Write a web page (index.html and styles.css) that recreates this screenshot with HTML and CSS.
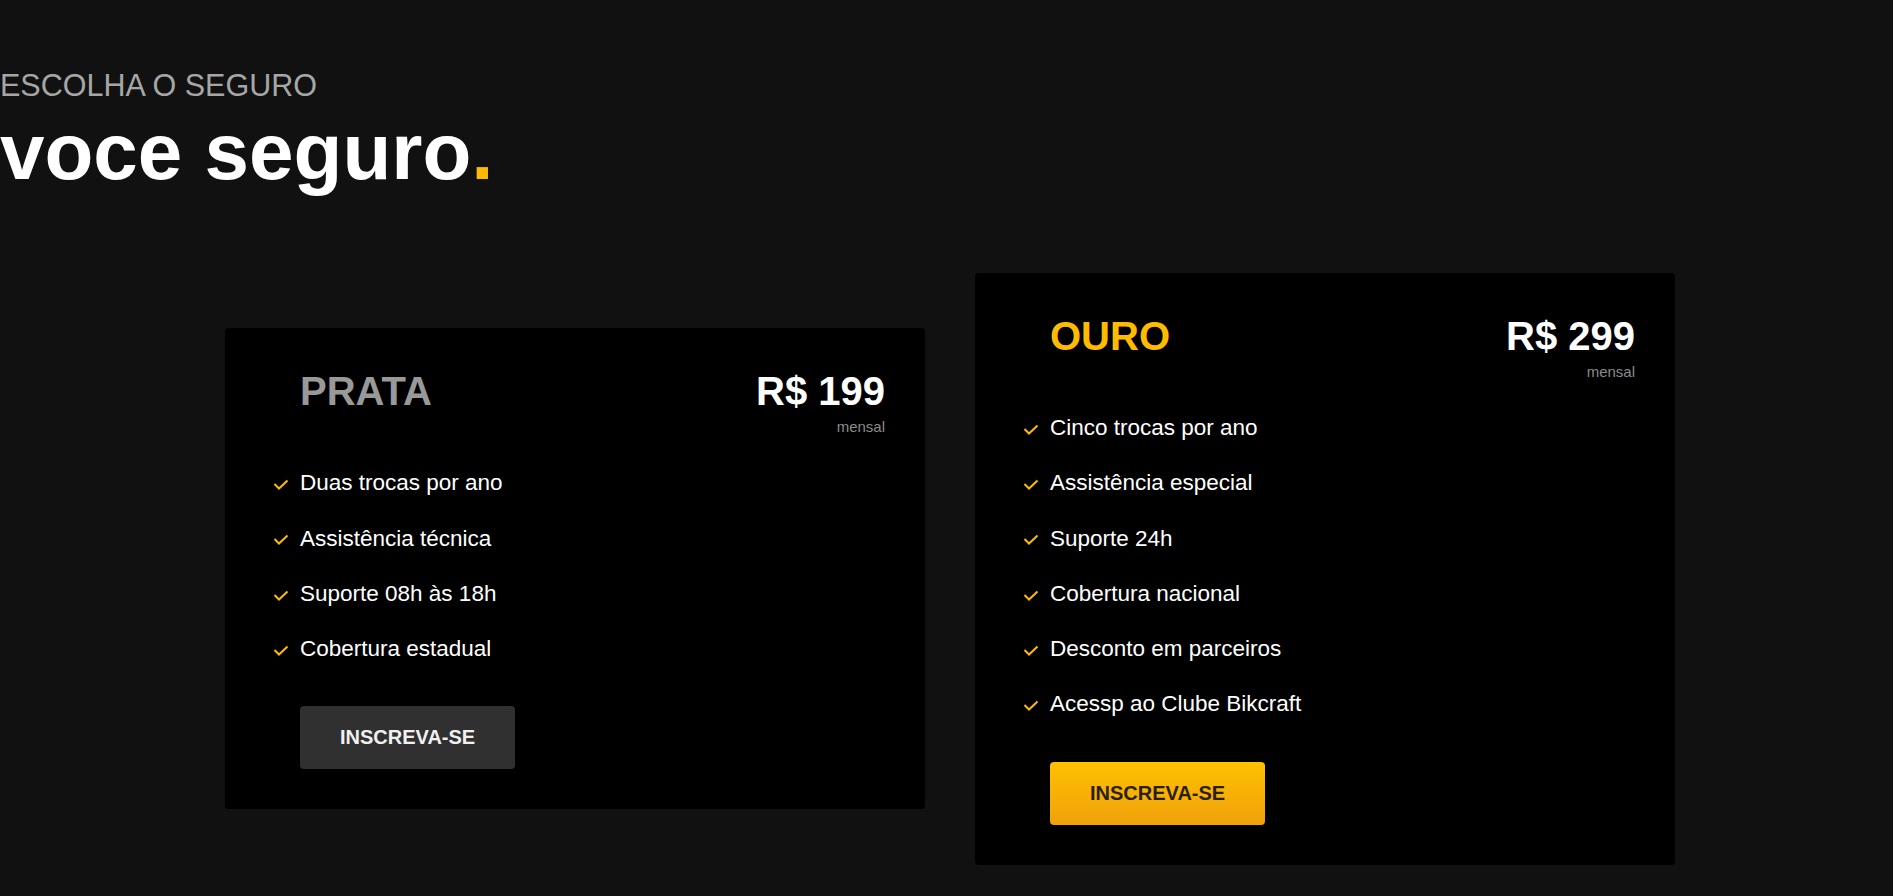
FILE: index.html
```html
<!DOCTYPE html>
<html lang="pt-BR">
<head>
<meta charset="utf-8">
<title>Seguros</title>
<link rel="stylesheet" href="styles.css">
</head>
<body>
<section class="seguros">
  <header class="intro">
    <p class="eyebrow">ESCOLHA O SEGURO</p>
    <h2 class="headline">voce seguro<span class="dot">.</span></h2>
  </header>

  <div class="plans">
    <article class="card">
      <div class="card-head">
        <h3 class="plan plan--prata">PRATA</h3>
        <div class="price">
          <span class="value">R$ 199</span>
          <span class="period">mensal</span>
        </div>
      </div>
      <ul class="features">
        <li><svg class="check" viewBox="0 0 16 11" width="16" height="11"><polyline points="1.5,5 6,9.5 14.5,1.5" /></svg>Duas trocas por ano</li>
        <li><svg class="check" viewBox="0 0 16 11" width="16" height="11"><polyline points="1.5,5 6,9.5 14.5,1.5" /></svg>Assistência técnica</li>
        <li><svg class="check" viewBox="0 0 16 11" width="16" height="11"><polyline points="1.5,5 6,9.5 14.5,1.5" /></svg>Suporte 08h às 18h</li>
        <li><svg class="check" viewBox="0 0 16 11" width="16" height="11"><polyline points="1.5,5 6,9.5 14.5,1.5" /></svg>Cobertura estadual</li>
      </ul>
      <a class="btn btn--dark" href="#">INSCREVA-SE</a>
    </article>

    <article class="card">
      <div class="card-head">
        <h3 class="plan plan--ouro">OURO</h3>
        <div class="price">
          <span class="value">R$ 299</span>
          <span class="period">mensal</span>
        </div>
      </div>
      <ul class="features">
        <li><svg class="check" viewBox="0 0 16 11" width="16" height="11"><polyline points="1.5,5 6,9.5 14.5,1.5" /></svg>Cinco trocas por ano</li>
        <li><svg class="check" viewBox="0 0 16 11" width="16" height="11"><polyline points="1.5,5 6,9.5 14.5,1.5" /></svg>Assistência especial</li>
        <li><svg class="check" viewBox="0 0 16 11" width="16" height="11"><polyline points="1.5,5 6,9.5 14.5,1.5" /></svg>Suporte 24h</li>
        <li><svg class="check" viewBox="0 0 16 11" width="16" height="11"><polyline points="1.5,5 6,9.5 14.5,1.5" /></svg>Cobertura nacional</li>
        <li><svg class="check" viewBox="0 0 16 11" width="16" height="11"><polyline points="1.5,5 6,9.5 14.5,1.5" /></svg>Desconto em parceiros</li>
        <li><svg class="check" viewBox="0 0 16 11" width="16" height="11"><polyline points="1.5,5 6,9.5 14.5,1.5" /></svg>Acessp ao Clube Bikcraft</li>
      </ul>
      <a class="btn btn--gold" href="#">INSCREVA-SE</a>
    </article>
  </div>
</section>
</body>
</html>
```
FILE: styles.css
```css
* {
  box-sizing: border-box;
}

html,
body {
  margin: 0;
  padding: 0;
  background: #111111;
  color: #ffffff;
  font-family: "Liberation Sans", Arial, Helvetica, sans-serif;
}

body {
  min-height: 896px;
}

.seguros {
  padding-top: 68px;
}

.intro {
  margin: 0;
}

.eyebrow {
  margin: 0;
  font-size: 30.5px;
  line-height: 34px;
  font-weight: 400;
  color: #a6a6a6;
}

.headline {
  margin: 4px 0 0;
  font-size: 80px;
  line-height: 92px;
  font-weight: 700;
  color: #ffffff;
}

.dot {
  color: #ffbb00;
}

.plans {
  display: grid;
  grid-template-columns: 700px 700px;
  column-gap: 50px;
  align-items: center;
  margin: 75px 0 0 225px;
}

.card {
  background: #000000;
  border-radius: 4px;
  padding: 40px 40px 40px 48px;
}

.card-head {
  display: flex;
  justify-content: space-between;
  align-items: flex-start;
  padding-left: 27px;
}

.plan {
  margin: 0;
  font-size: 40px;
  line-height: 46px;
  font-weight: 700;
}

.plan--prata {
  color: #999999;
}

.plan--ouro {
  color: #ffbb00;
}

.price {
  display: flex;
  flex-direction: column;
  align-items: flex-end;
}

.value {
  font-size: 40px;
  line-height: 46px;
  font-weight: 700;
  color: #ffffff;
}

.period {
  margin-top: 4px;
  font-size: 15px;
  line-height: 17px;
  color: #8a8a8a;
}

.features {
  list-style: none;
  margin: 20px 0 0;
  padding: 0;
}

.features li {
  display: flex;
  align-items: center;
  gap: 11px;
  padding: 15px 0;
  font-size: 22.5px;
  line-height: 25.3px;
  color: #ffffff;
}

.check {
  flex: none;
  width: 16px;
  height: 11px;
  margin-top: 3px;
  fill: none;
  stroke: #ffbb00;
  stroke-width: 2;
}

.btn {
  display: inline-block;
  margin: 30px 0 0 27px;
  padding: 20px 40px;
  border-radius: 4px;
  font-size: 20px;
  line-height: 23px;
  font-weight: 700;
  text-decoration: none;
}

.btn--dark {
  background: #303030;
  color: #f0f0f0;
}

.btn--gold {
  background: linear-gradient(#ffc100, #f0a10c);
  color: #2a1f00;
}
```
